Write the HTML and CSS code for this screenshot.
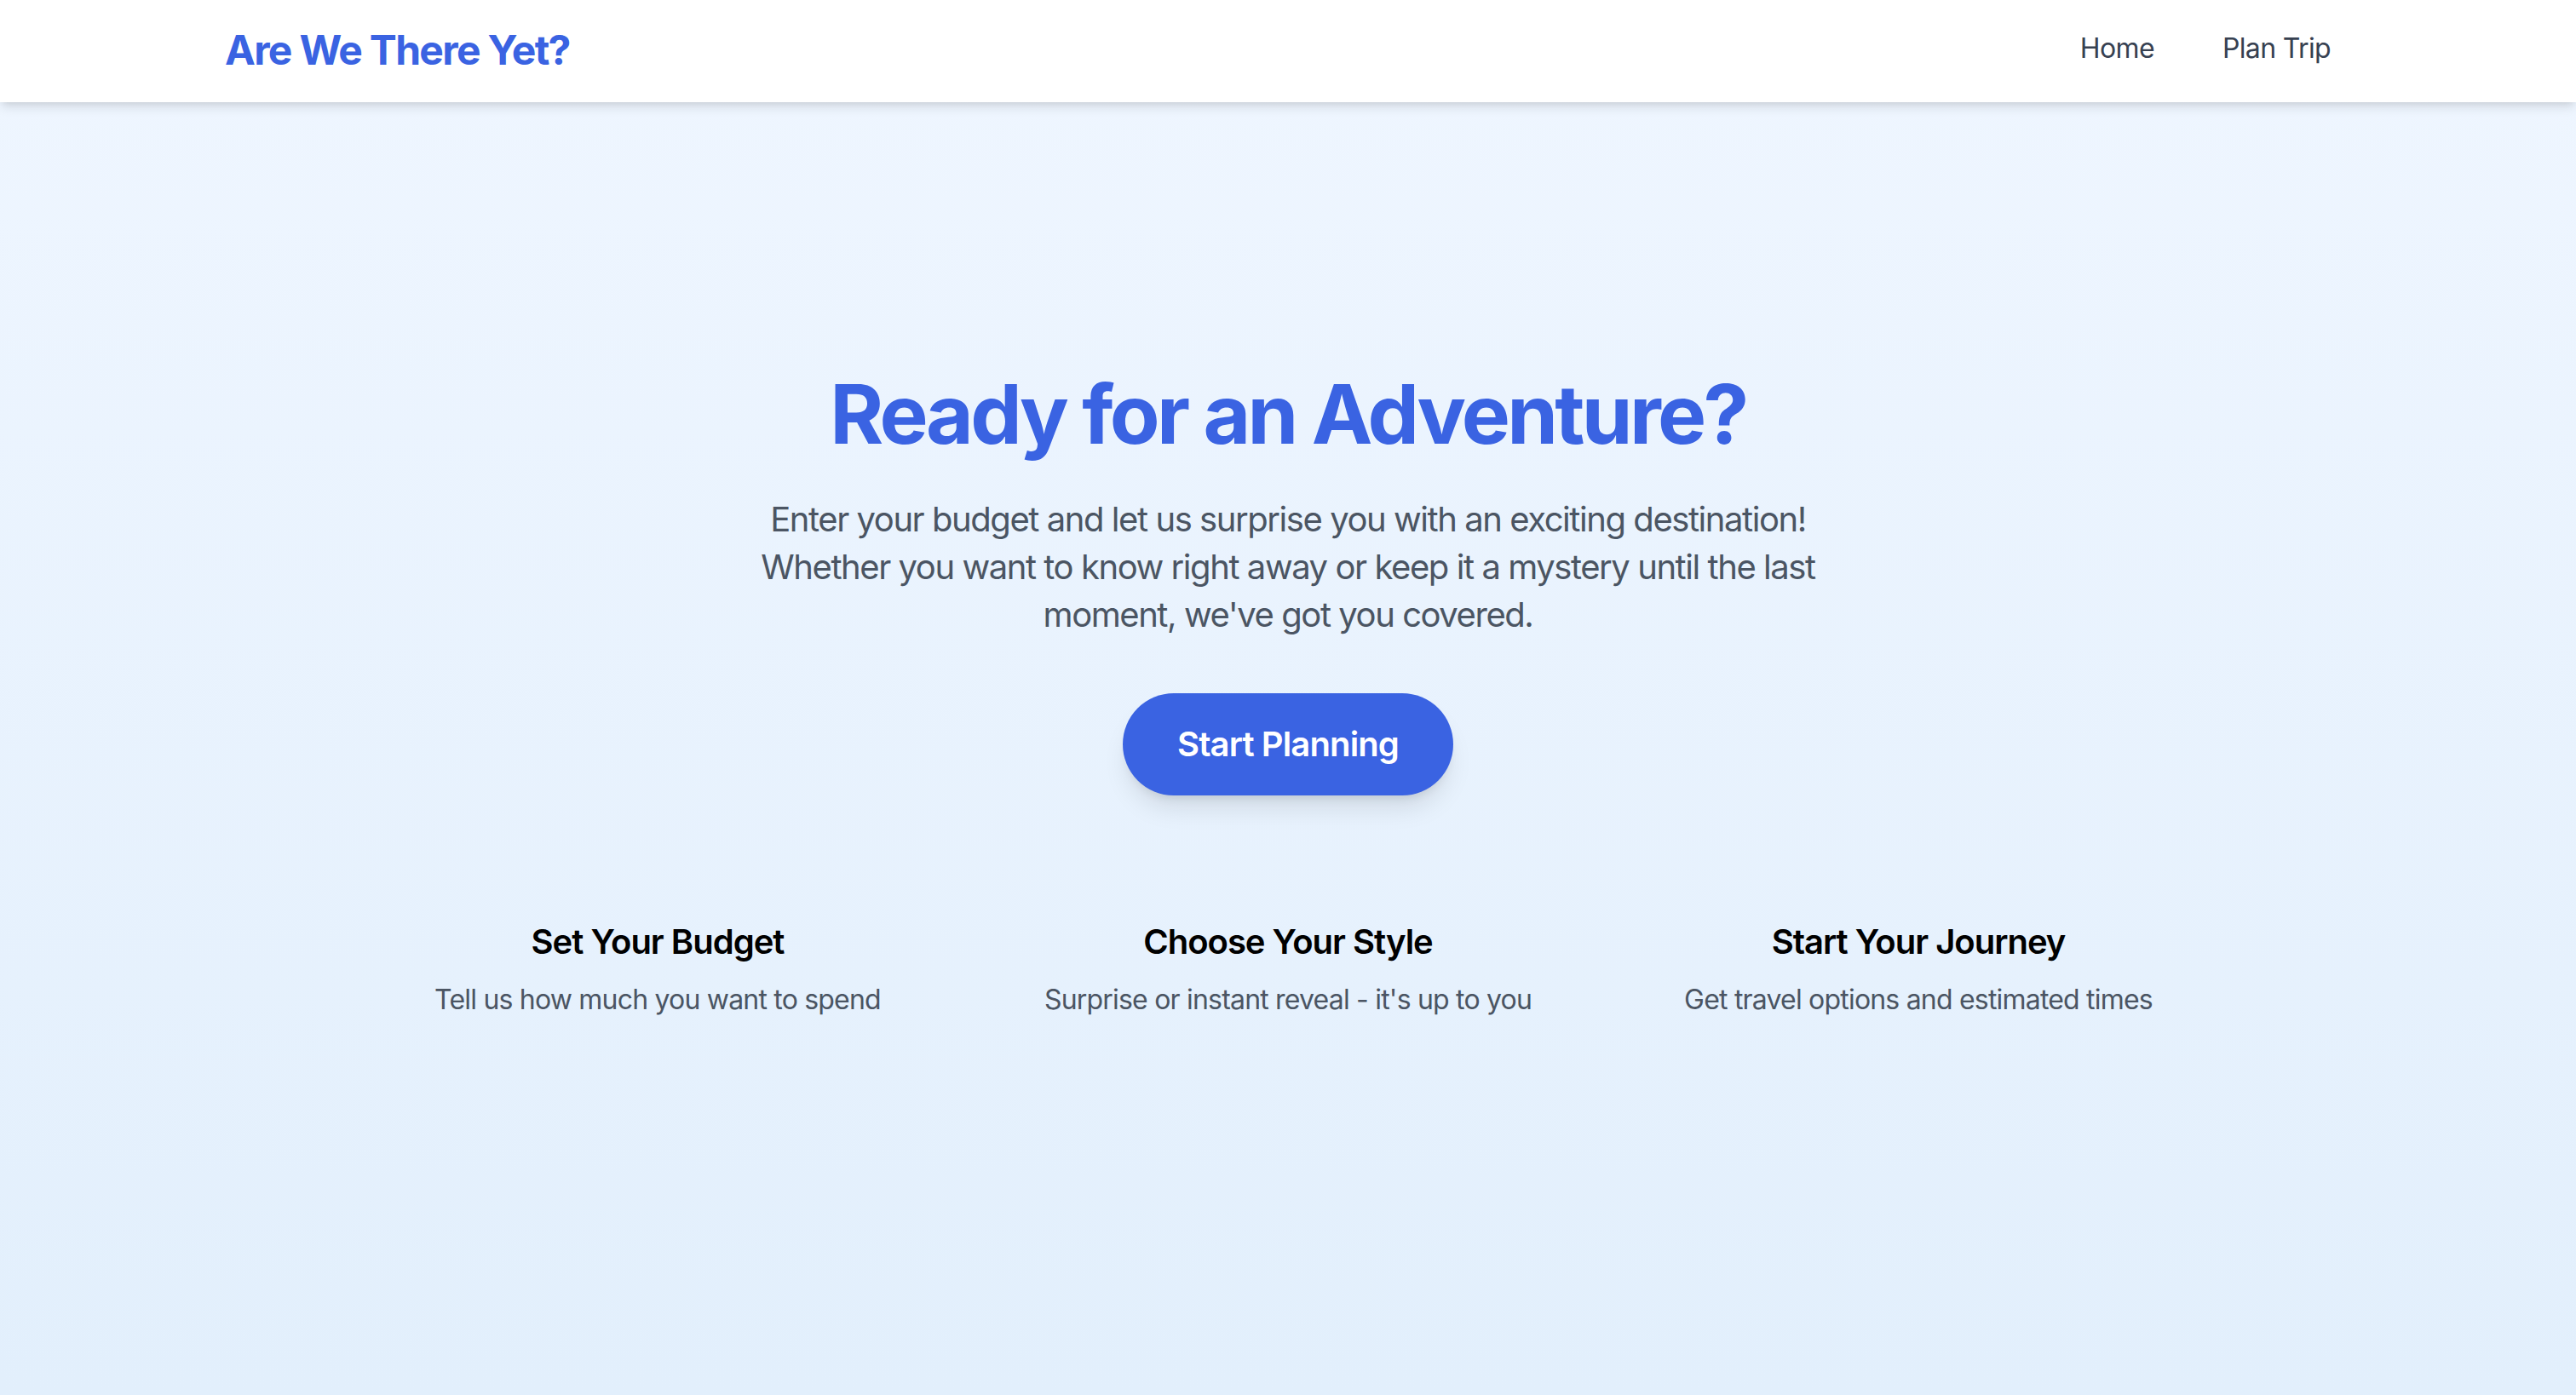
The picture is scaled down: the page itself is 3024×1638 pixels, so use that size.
FILE: index.html
```html
<!DOCTYPE html>
<html lang="en">
<head>
<meta charset="utf-8">
<title>Are We There Yet?</title>
<link rel="stylesheet" href="styles.css">
</head>
<body>
<header class="site-header">
  <div class="container header-inner">
    <a class="logo" href="#">Are We There Yet?</a>
    <nav class="nav">
      <a class="nav-link" href="#">Home</a>
      <a class="nav-link" href="#">Plan Trip</a>
    </nav>
  </div>
</header>
<main class="hero">
  <h1 class="hero-title">Ready for an Adventure?</h1>
  <p class="hero-text">Enter your budget and let us surprise you with an exciting destination! Whether you want to know right away or keep it a mystery until the last moment, we've got you covered.</p>
  <a class="cta" href="#">Start Planning</a>
  <section class="features">
    <div class="feature">
      <h3 class="feature-title">Set Your Budget</h3>
      <p class="feature-text">Tell us how much you want to spend</p>
    </div>
    <div class="feature">
      <h3 class="feature-title">Choose Your Style</h3>
      <p class="feature-text">Surprise or instant reveal - it's up to you</p>
    </div>
    <div class="feature">
      <h3 class="feature-title">Start Your Journey</h3>
      <p class="feature-text">Get travel options and estimated times</p>
    </div>
  </section>
</main>
</body>
</html>
```
FILE: styles.css
```css
* { box-sizing: border-box; }
html, body { margin: 0; padding: 0; }
body {
  font-family: Inter, "Noto Sans", "Liberation Sans", sans-serif;
  min-height: 1638px;
  background: linear-gradient(180deg, #eff6ff 0%, #e2effc 100%);
  color: #111827;
}
a { text-decoration: none; }
.site-header {
  background: #ffffff;
  height: 120px;
  box-shadow: 0 8px 12px -2px rgba(0,0,0,0.10), 0 4px 8px -4px rgba(0,0,0,0.10);
  position: relative;
}
.container {
  max-width: 2560px;
  margin: 0 auto;
  padding: 0 32px;
}
.header-inner {
  height: 120px;
  padding-bottom: 4px;
  display: flex;
  align-items: center;
  justify-content: space-between;
}
.logo {
  font-size: 48px;
  font-weight: 700;
  color: #3a63e2;
  letter-spacing: -0.035em;
}
.nav {
  display: flex;
  gap: 32px;
  padding-bottom: 4px;
}
.nav-link {
  font-size: 32px;
  color: #374151;
  padding: 8px 24px;
  letter-spacing: -0.02em;
}
.hero {
  display: flex;
  flex-direction: column;
  align-items: center;
  text-align: center;
  padding-top: 318px;
}
.hero-title {
  margin: 0 0 48px;
  font-size: 96px;
  line-height: 96px;
  font-weight: 700;
  color: #3a63e2;
  letter-spacing: -0.038em;
}
.hero-text {
  margin: 0 0 64px;
  max-width: 1330px;
  font-size: 40px;
  line-height: 56px;
  color: #4b5563;
  letter-spacing: -0.036em;
}
.cta {
  display: inline-block;
  background: #3a63e2;
  color: #ffffff;
  font-size: 40px;
  line-height: 56px;
  font-weight: 600;
  padding: 32px 64px;
  border-radius: 9999px;
  letter-spacing: -0.022em;
  box-shadow: 0 20px 30px -6px rgba(0,0,0,0.10), 0 8px 12px -6px rgba(0,0,0,0.10);
}
.features {
  margin-top: 144px;
  display: grid;
  grid-template-columns: repeat(3, 676px);
  gap: 64px;
}
.feature-title {
  margin: 0 0 16px;
  font-size: 40px;
  line-height: 56px;
  font-weight: 600;
  color: #000000;
  letter-spacing: -0.025em;
}
.feature-text {
  margin: 0;
  font-size: 32px;
  line-height: 48px;
  color: #4b5563;
  letter-spacing: -0.025em;
}
```
